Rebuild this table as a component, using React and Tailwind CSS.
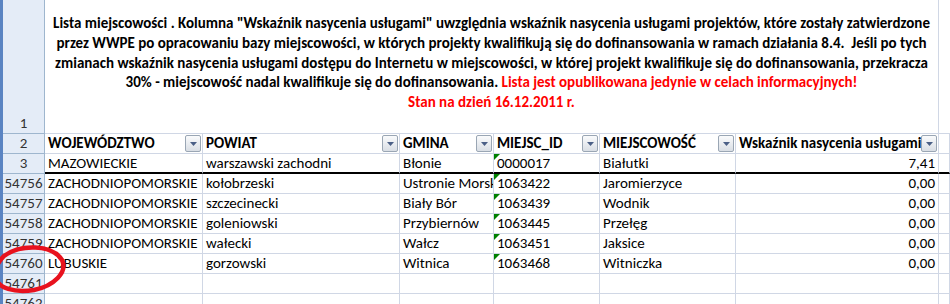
import React from "react";

// Column template: row header, A..F, and the sliver of G at the right edge
const COLS = "grid grid-cols-[42px_158px_197px_94px_106px_136px_203px_1fr]";

const headers = [
  "WOJEWÓDZTWO",
  "POWIAT",
  "GMINA",
  "MIEJSC_ID",
  "MIEJSCOWOŚĆ",
  "Wskaźnik nasycenia usługami",
];

const rows = [
  { n: "54756", woj: "ZACHODNIOPOMORSKIE", pow: "kołobrzeski", gm: "Ustronie Morskie", id: "1063422", m: "Jaromierzyce", w: "0,00" },
  { n: "54757", woj: "ZACHODNIOPOMORSKIE", pow: "szczecinecki", gm: "Biały Bór", id: "1063439", m: "Wodnik", w: "0,00" },
  { n: "54758", woj: "ZACHODNIOPOMORSKIE", pow: "goleniowski", gm: "Przybiernów", id: "1063445", m: "Przełęg", w: "0,00" },
  { n: "54759", woj: "ZACHODNIOPOMORSKIE", pow: "wałecki", gm: "Wałcz", id: "1063451", m: "Jaksice", w: "0,00" },
  { n: "54760", woj: "LUBUSKIE", pow: "gorzowski", gm: "Witnica", id: "1063468", m: "Witniczka", w: "0,00" },
];

const RowHead = ({ children, className = "" }) => (
  <div
    className={`flex items-center justify-center border-r border-b border-[#9EB6CE] bg-[#E4ECF7] text-[#333] ${className}`}
  >
    {children}
  </div>
);

const Cell = ({ children, className = "" }) => (
  <div
    className={`relative overflow-hidden whitespace-nowrap border-r border-b border-[#D0D7E5] px-[3px] flex items-center ${className}`}
  >
    {children}
  </div>
);

// Text-stored-as-number marker in the top-left corner
const GreenFlag = () => (
  <span className="absolute left-0 top-0 h-0 w-0 border-t-[6px] border-r-[6px] border-t-[#008000] border-r-transparent" />
);

const FilterButton = () => (
  <span className="absolute right-[1px] top-[1px] flex h-[17px] w-[16px] items-center justify-center rounded-[2px] border border-[#9AA6B4] bg-gradient-to-b from-[#FAFBFC] to-[#D9DEE5]">
    <svg width="7" height="4" viewBox="0 0 7 4">
      <path d="M0 0h7L3.5 4z" fill="#4A5F86" />
    </svg>
  </span>
);

const App = () => {
  return (
    <div className="relative flex h-[304px] w-[950px] overflow-hidden bg-white font-['Carlito','Liberation_Sans',sans-serif] text-[15px] leading-none text-black">
      <div className="w-[3px] shrink-0 bg-[#5A84C2]" />
      <div className="flex-1">
        {/* Row 1: merged title */}
        <div className={`${COLS} h-[134px]`}>
          <RowHead className="!items-end pb-[2px]">1</RowHead>
          <div className="col-span-6 flex flex-col items-center border-r border-b border-[#D0D7E5] pt-[14px] text-center text-[15px] font-bold leading-[19.75px]">
            <div className="whitespace-nowrap">
              Lista miejscowości . Kolumna "Wskaźnik nasycenia usługami" uwzględnia wskaźnik nasycenia usługami projektów, które zostały zatwierdzone
            </div>
            <div className="whitespace-pre">
              przez WWPE po opracowaniu bazy miejscowości, w których projekty kwalifikują się do dofinansowania w ramach działania 8.4.  Jeśli po tych
            </div>
            <div className="whitespace-nowrap">
              zmianach wskaźnik nasycenia usługami dostępu do Internetu w miejscowości, w której projekt kwalifikuje się do dofinansowania, przekracza
            </div>
            <div className="whitespace-nowrap">
              30% - miejscowość nadal kwalifikuje się do dofinansowania.{" "}
              <span className="text-[#FF0000]">Lista jest opublikowana jedynie w celach informacyjnych!</span>
            </div>
            <div className="whitespace-nowrap text-[#FF0000]">Stan na dzień 16.12.2011 r.</div>
          </div>
          <div className="border-b border-[#D0D7E5]" />
        </div>

        {/* Row 2: column headers with filter buttons */}
        <div className={`${COLS} h-[20px]`}>
          <RowHead>2</RowHead>
          {headers.map((h) => (
            <Cell key={h} className="font-bold">
              {h}
              <FilterButton />
            </Cell>
          ))}
          <Cell />
        </div>

        {/* Row 3: first record, thick rule below */}
        <div className={`${COLS} h-[20px]`}>
          <RowHead>3</RowHead>
          <Cell className="!border-b-2 !border-b-black">MAZOWIECKIE</Cell>
          <Cell className="!border-b-2 !border-b-black">warszawski zachodni</Cell>
          <Cell className="!border-b-2 !border-b-black">Błonie</Cell>
          <Cell className="!border-b-2 !border-b-black">
            <GreenFlag />
            0000017
          </Cell>
          <Cell className="!border-b-2 !border-b-black">Białutki</Cell>
          <Cell className="!border-b-2 !border-b-black justify-end">7,41</Cell>
          <Cell className="!border-b-2 !border-b-black" />
        </div>

        {rows.map((r) => (
          <div key={r.n} className={`${COLS} h-[20px]`}>
            <RowHead>{r.n}</RowHead>
            <Cell>{r.woj}</Cell>
            <Cell>{r.pow}</Cell>
            <Cell>{r.gm}</Cell>
            <Cell>
              <GreenFlag />
              {r.id}
            </Cell>
            <Cell>{r.m}</Cell>
            <Cell className="justify-end">{r.w}</Cell>
            <Cell />
          </div>
        ))}

        {["54761", "54762"].map((n) => (
          <div key={n} className={`${COLS} h-[20px]`}>
            <RowHead>{n}</RowHead>
            <Cell />
            <Cell />
            <Cell />
            <Cell />
            <Cell />
            <Cell />
            <Cell />
          </div>
        ))}
      </div>

      {/* Hand-drawn red ring around the last row number */}
      <svg
        className="pointer-events-none absolute left-[-10px] top-[242px]"
        width="80"
        height="54"
        viewBox="0 0 80 54"
      >
        <path
          d="M14 14 C30 2 62 2 72 18 C78 30 64 44 44 48 C24 51 8 46 6 36 C4 28 8 20 14 14"
          fill="none"
          stroke="#E8121E"
          strokeWidth="4.5"
          strokeLinecap="round"
        />
      </svg>
    </div>
  );
};

export default App;
